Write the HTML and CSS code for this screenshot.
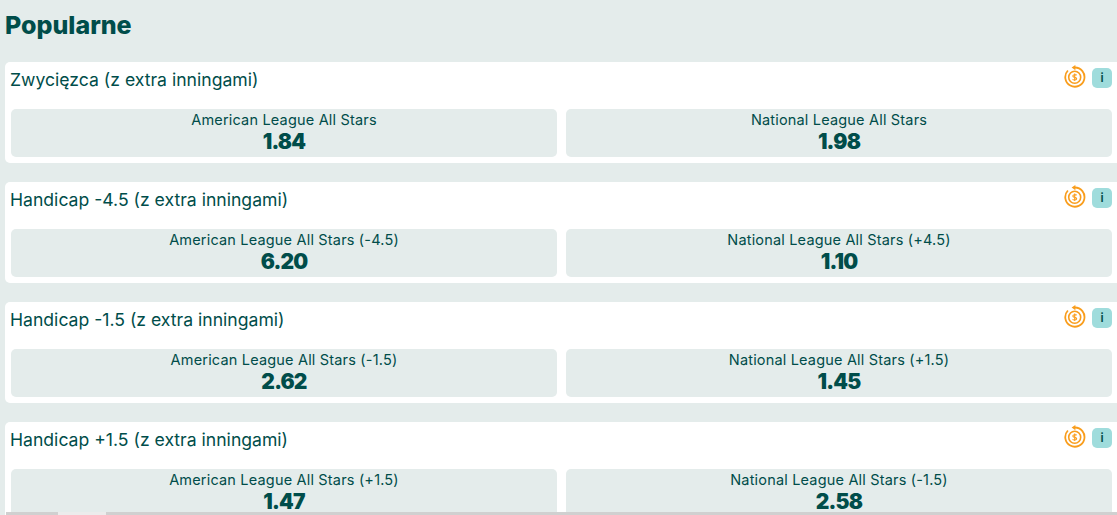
FILE: index.html
```html
<!DOCTYPE html>
<html lang="pl">
<head>
<meta charset="utf-8">
<title>Popularne</title>
<link rel="stylesheet" href="styles.css">
</head>
<body>
<svg class="defs" width="0" height="0" aria-hidden="true">
  <symbol id="cash" viewBox="0 0 22 24">
    <path d="M10.800 2.500a9.600 9.600 0 1 1-6.900 3" fill="none" stroke="currentColor" stroke-width="1.800"/>
    <path d="M11.400 0 7.600 2.600l3.800 2.600z" fill="currentColor"/>
    <circle cx="10.700" cy="12.200" r="6" fill="none" stroke="currentColor" stroke-width="1.600"/>
    <path d="M12.700 10.300c-.5-.8-3.800-1.100-3.900.7-.1 1.900 4 .9 3.900 2.800-.1 1.700-3.500 1.500-4.100.5M10.700 8.500v7.400" fill="none" stroke="currentColor" stroke-width="1.100"/>
  </symbol>
</svg>
<main class="page">
  <h1 class="heading">Popularne</h1>
  <section class="market">
    <header class="market-head">
      <h2 class="market-title">Zwycięzca (z extra inningami)</h2>
      <div class="market-icons"><svg class="cash"><use href="#cash"/></svg><span class="info">i</span></div>
    </header>
    <div class="odds">
      <button class="odd"><span class="odd-name">American League All Stars</span><span class="odd-value">1.84</span></button>
      <button class="odd"><span class="odd-name">National League All Stars</span><span class="odd-value">1.98</span></button>
    </div>
  </section>
  <section class="market">
    <header class="market-head">
      <h2 class="market-title">Handicap -4.5 (z extra inningami)</h2>
      <div class="market-icons"><svg class="cash"><use href="#cash"/></svg><span class="info">i</span></div>
    </header>
    <div class="odds">
      <button class="odd"><span class="odd-name">American League All Stars (-4.5)</span><span class="odd-value">6.20</span></button>
      <button class="odd"><span class="odd-name">National League All Stars (+4.5)</span><span class="odd-value">1.10</span></button>
    </div>
  </section>
  <section class="market">
    <header class="market-head">
      <h2 class="market-title">Handicap -1.5 (z extra inningami)</h2>
      <div class="market-icons"><svg class="cash"><use href="#cash"/></svg><span class="info">i</span></div>
    </header>
    <div class="odds">
      <button class="odd"><span class="odd-name">American League All Stars (-1.5)</span><span class="odd-value">2.62</span></button>
      <button class="odd"><span class="odd-name">National League All Stars (+1.5)</span><span class="odd-value">1.45</span></button>
    </div>
  </section>
  <section class="market">
    <header class="market-head">
      <h2 class="market-title">Handicap +1.5 (z extra inningami)</h2>
      <div class="market-icons"><svg class="cash"><use href="#cash"/></svg><span class="info">i</span></div>
    </header>
    <div class="odds">
      <button class="odd"><span class="odd-name">American League All Stars (+1.5)</span><span class="odd-value">1.47</span></button>
      <button class="odd"><span class="odd-name">National League All Stars (-1.5)</span><span class="odd-value">2.58</span></button>
    </div>
  </section>
</main>
<div class="hscroll"><div class="hscroll-thumb"></div></div>
</body>
</html>
```
FILE: styles.css
```css
html, body {
  margin: 0;
  height: 515px;
  overflow: hidden;
  background: #e4eceb;
  font-family: "Inter", "Liberation Sans", sans-serif;
  color: #004d4a;
}
.defs { position: absolute; }
.page {
  display: flex;
  flex-direction: column;
  gap: 19px;
  padding-left: 5px;
}
.heading {
  margin: 0;
  height: 43px;
  box-sizing: border-box;
  padding-top: 8px;
  font-size: 25px;
  line-height: 34px;
  font-weight: 800;
}
.market {
  background: #fff;
  border-radius: 5px 0 0 5px;
  height: 101px;
  box-sizing: border-box;
  padding: 0 5px 6px 6px;
  display: flex;
  flex-direction: column;
}
.market-head {
  height: 47px;
  flex: none;
  display: flex;
  justify-content: space-between;
}
.market-title {
  margin: 0 0 0 -1px;
  padding-top: 6px;
  font-size: 17.6px;
  line-height: 24px;
  font-weight: 400;
}
.market-icons {
  display: flex;
  gap: 6px;
  align-items: flex-start;
  padding-top: 3px;
}
.cash {
  width: 22px;
  height: 24px;
  color: #f99d1c;
}
.info {
  width: 20px;
  height: 20px;
  margin-top: 3px;
  border-radius: 5px;
  background: #9fdcdc;
  font-size: 12px;
  font-weight: 600;
  line-height: 20px;
  text-align: center;
}
.odds {
  display: grid;
  grid-template-columns: 1fr 1fr;
  gap: 9px;
}
.odd {
  height: 48px;
  padding: 2px 0 0;
  border: 0;
  border-radius: 5px;
  background: #e4eceb;
  color: inherit;
  font-family: inherit;
  display: flex;
  flex-direction: column;
  align-items: center;
}
.odd-name {
  font-size: 14.5px;
  line-height: 18px;
  font-weight: 400;
  letter-spacing: 0.18px;
}
.odd-value {
  font-size: 21px;
  line-height: 26px;
  font-weight: 900;
  letter-spacing: -0.8px;
}
.hscroll {
  position: fixed;
  left: 6px;
  right: 0;
  bottom: 0;
  height: 3px;
  background: #d0d0d0;
}
.hscroll-thumb {
  position: absolute;
  left: 52px;
  width: 48px;
  top: 0;
  bottom: 0;
  background: #ececec;
}
```
